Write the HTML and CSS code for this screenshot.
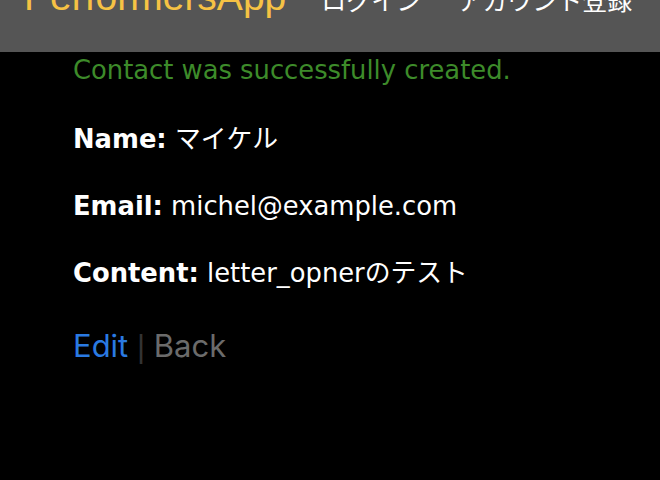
FILE: index.html
```html
<!DOCTYPE html>
<html lang="ja">
<head>
<meta charset="utf-8">
<title>PerformersApp</title>
<link rel="stylesheet" href="styles.css">
</head>
<body>
<header class="topbar">
  <a class="brand" href="#">PerformersApp</a>
  <nav class="nav">
    <a class="nav-link" href="#">ログイン</a>
    <a class="nav-link" href="#">アカウント登録</a>
  </nav>
</header>
<main class="content">
  <p class="notice">Contact was successfully created.</p>
  <p class="field"><strong>Name:</strong> マイケル</p>
  <p class="field"><strong>Email:</strong> michel@example.com</p>
  <p class="field"><strong>Content:</strong> letter_opnerのテスト</p>
  <div class="actions">
    <a class="edit" href="#">Edit</a> <span class="sep">|</span> <a class="back" href="#">Back</a>
  </div>
</main>
</body>
</html>
```
FILE: styles.css
```css
html, body {
  margin: 0;
  padding: 0;
  background: #000;
  height: 100%;
  overflow: hidden;
}
body {
  font-family: "DejaVu Sans", "Noto Sans CJK JP", sans-serif;
  color: #fff;
}
a { text-decoration: none; }

.topbar {
  display: flex;
  align-items: baseline;
  box-sizing: border-box;
  height: 82px;
  margin-top: -30px;
  padding: 5px 0 0 24px;
  background: #555555;
}
.brand {
  font-family: "Liberation Sans", Arial, sans-serif;
  font-size: 39px;
  color: #f6c244;
}
.nav {
  display: flex;
  gap: 36px;
  margin-left: 35px;
}
.nav-link {
  font-family: "Noto Sans CJK JP", sans-serif;
  font-size: 25px;
  color: #fff;
}

.content {
  padding: 0 0 0 73px;
}
.notice {
  margin: 3px 0 0;
  font-size: 25.8px;
  line-height: 30px;
  color: #3d8b2a;
}
.field {
  margin: 34px 0 0;
  font-size: 25.8px;
  line-height: 40px;
}
.field + .field {
  margin-top: 27px;
}
.actions {
  margin-top: 33px;
  font-family: Inter, "Liberation Sans", sans-serif;
  font-size: 31px;
  line-height: 40px;
}
.edit { color: #2a7ae2; }
.sep {
  font-family: "Liberation Sans", Arial, sans-serif;
  font-size: 31px;
  color: #333;
}
.back { color: #6b6b6b; }
```
